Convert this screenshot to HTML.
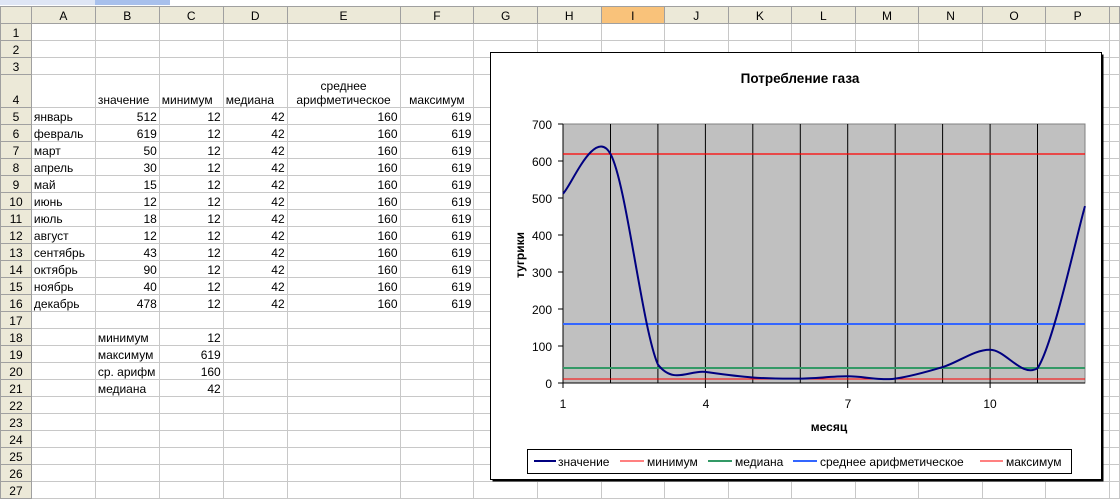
<!DOCTYPE html>
<html><head><meta charset="utf-8"><style>
body{margin:0;width:1120px;height:493px;overflow:hidden;background:#fff;font-family:"Liberation Sans",Arial,sans-serif;font-size:12px;position:relative}
table{border-collapse:collapse;table-layout:fixed;position:absolute;left:0;top:6px}
td{border:1px solid #c8c8c8;height:16px;padding:0 2px;white-space:nowrap;overflow:hidden;line-height:14px;vertical-align:bottom}
td.h{background:#ece9d8;border-color:#a0a0a0;text-align:center;color:#000}
td.r{text-align:right}
td.c{text-align:center}
tr.hd td{background:#ece9d8;border-color:#a0a0a0;text-align:center;height:16px}
td.sel{background:#f9c27a!important}
.top{position:absolute;left:0;top:0;width:170px;height:5px;background:#a8c0ec}
.top2{position:absolute;left:0;top:0;width:95px;height:5px;background:#dfe6f5}
</style></head><body>
<div class="top"></div><div class="top2"></div>
<table>
<colgroup><col style="width:31px"><col style="width:64px"><col style="width:64px"><col style="width:64px"><col style="width:64px"><col style="width:113px"><col style="width:74px"><col style="width:64px"><col style="width:64px"><col style="width:64px"><col style="width:64px"><col style="width:64px"><col style="width:64px"><col style="width:64px"><col style="width:64px"><col style="width:64px"><col style="width:64px"><col style="width:10px"></colgroup>
<tr class="hd"><td></td><td>A</td><td>B</td><td>C</td><td>D</td><td>E</td><td>F</td><td>G</td><td>H</td><td class="sel">I</td><td>J</td><td>K</td><td>L</td><td>M</td><td>N</td><td>O</td><td>P</td><td></td></tr>
<tr><td class="h">1</td><td></td><td></td><td></td><td></td><td></td><td></td><td></td><td></td><td></td><td></td><td></td><td></td><td></td><td></td><td></td><td></td><td></td></tr>
<tr><td class="h">2</td><td></td><td></td><td></td><td></td><td></td><td></td><td></td><td></td><td></td><td></td><td></td><td></td><td></td><td></td><td></td><td></td><td></td></tr>
<tr><td class="h">3</td><td></td><td></td><td></td><td></td><td></td><td></td><td></td><td></td><td></td><td></td><td></td><td></td><td></td><td></td><td></td><td></td><td></td></tr>
<tr><td class="h" style="height:32px;vertical-align:bottom">4</td><td></td><td>значение</td><td>минимум</td><td>медиана</td><td class="c">среднее<br>арифметическое</td><td class="c">максимум</td><td></td><td></td><td></td><td></td><td></td><td></td><td></td><td></td><td></td><td></td><td></td></tr>
<tr><td class="h">5</td><td>январь</td><td class="r">512</td><td class="r">12</td><td class="r">42</td><td class="r">160</td><td class="r">619</td><td></td><td></td><td></td><td></td><td></td><td></td><td></td><td></td><td></td><td></td><td></td></tr>
<tr><td class="h">6</td><td>февраль</td><td class="r">619</td><td class="r">12</td><td class="r">42</td><td class="r">160</td><td class="r">619</td><td></td><td></td><td></td><td></td><td></td><td></td><td></td><td></td><td></td><td></td><td></td></tr>
<tr><td class="h">7</td><td>март</td><td class="r">50</td><td class="r">12</td><td class="r">42</td><td class="r">160</td><td class="r">619</td><td></td><td></td><td></td><td></td><td></td><td></td><td></td><td></td><td></td><td></td><td></td></tr>
<tr><td class="h">8</td><td>апрель</td><td class="r">30</td><td class="r">12</td><td class="r">42</td><td class="r">160</td><td class="r">619</td><td></td><td></td><td></td><td></td><td></td><td></td><td></td><td></td><td></td><td></td><td></td></tr>
<tr><td class="h">9</td><td>май</td><td class="r">15</td><td class="r">12</td><td class="r">42</td><td class="r">160</td><td class="r">619</td><td></td><td></td><td></td><td></td><td></td><td></td><td></td><td></td><td></td><td></td><td></td></tr>
<tr><td class="h">10</td><td>июнь</td><td class="r">12</td><td class="r">12</td><td class="r">42</td><td class="r">160</td><td class="r">619</td><td></td><td></td><td></td><td></td><td></td><td></td><td></td><td></td><td></td><td></td><td></td></tr>
<tr><td class="h">11</td><td>июль</td><td class="r">18</td><td class="r">12</td><td class="r">42</td><td class="r">160</td><td class="r">619</td><td></td><td></td><td></td><td></td><td></td><td></td><td></td><td></td><td></td><td></td><td></td></tr>
<tr><td class="h">12</td><td>август</td><td class="r">12</td><td class="r">12</td><td class="r">42</td><td class="r">160</td><td class="r">619</td><td></td><td></td><td></td><td></td><td></td><td></td><td></td><td></td><td></td><td></td><td></td></tr>
<tr><td class="h">13</td><td>сентябрь</td><td class="r">43</td><td class="r">12</td><td class="r">42</td><td class="r">160</td><td class="r">619</td><td></td><td></td><td></td><td></td><td></td><td></td><td></td><td></td><td></td><td></td><td></td></tr>
<tr><td class="h">14</td><td>октябрь</td><td class="r">90</td><td class="r">12</td><td class="r">42</td><td class="r">160</td><td class="r">619</td><td></td><td></td><td></td><td></td><td></td><td></td><td></td><td></td><td></td><td></td><td></td></tr>
<tr><td class="h">15</td><td>ноябрь</td><td class="r">40</td><td class="r">12</td><td class="r">42</td><td class="r">160</td><td class="r">619</td><td></td><td></td><td></td><td></td><td></td><td></td><td></td><td></td><td></td><td></td><td></td></tr>
<tr><td class="h">16</td><td>декабрь</td><td class="r">478</td><td class="r">12</td><td class="r">42</td><td class="r">160</td><td class="r">619</td><td></td><td></td><td></td><td></td><td></td><td></td><td></td><td></td><td></td><td></td><td></td></tr>
<tr><td class="h">17</td><td></td><td></td><td></td><td></td><td></td><td></td><td></td><td></td><td></td><td></td><td></td><td></td><td></td><td></td><td></td><td></td><td></td></tr>
<tr><td class="h">18</td><td></td><td>минимум</td><td class="r">12</td><td></td><td></td><td></td><td></td><td></td><td></td><td></td><td></td><td></td><td></td><td></td><td></td><td></td><td></td></tr>
<tr><td class="h">19</td><td></td><td>максимум</td><td class="r">619</td><td></td><td></td><td></td><td></td><td></td><td></td><td></td><td></td><td></td><td></td><td></td><td></td><td></td><td></td></tr>
<tr><td class="h">20</td><td></td><td>ср. арифм</td><td class="r">160</td><td></td><td></td><td></td><td></td><td></td><td></td><td></td><td></td><td></td><td></td><td></td><td></td><td></td><td></td></tr>
<tr><td class="h">21</td><td></td><td>медиана</td><td class="r">42</td><td></td><td></td><td></td><td></td><td></td><td></td><td></td><td></td><td></td><td></td><td></td><td></td><td></td><td></td></tr>
<tr><td class="h">22</td><td></td><td></td><td></td><td></td><td></td><td></td><td></td><td></td><td></td><td></td><td></td><td></td><td></td><td></td><td></td><td></td><td></td></tr>
<tr><td class="h">23</td><td></td><td></td><td></td><td></td><td></td><td></td><td></td><td></td><td></td><td></td><td></td><td></td><td></td><td></td><td></td><td></td><td></td></tr>
<tr><td class="h">24</td><td></td><td></td><td></td><td></td><td></td><td></td><td></td><td></td><td></td><td></td><td></td><td></td><td></td><td></td><td></td><td></td><td></td></tr>
<tr><td class="h">25</td><td></td><td></td><td></td><td></td><td></td><td></td><td></td><td></td><td></td><td></td><td></td><td></td><td></td><td></td><td></td><td></td><td></td></tr>
<tr><td class="h">26</td><td></td><td></td><td></td><td></td><td></td><td></td><td></td><td></td><td></td><td></td><td></td><td></td><td></td><td></td><td></td><td></td><td></td></tr>
<tr><td class="h">27</td><td></td><td></td><td></td><td></td><td></td><td></td><td></td><td></td><td></td><td></td><td></td><td></td><td></td><td></td><td></td><td></td><td></td></tr>
</table>

<svg style="position:absolute;left:0;top:0" width="1120" height="493" font-family="Liberation Sans, Arial, sans-serif">
<rect x="492.5" y="54.5" width="611" height="427" fill="#000"/>
<rect x="490.5" y="52.5" width="611" height="427" fill="#fff" stroke="#000"/>
<text x="800" y="83" text-anchor="middle" font-size="13.5" font-weight="bold">Потребление газа</text>
<rect x="563" y="124" width="522" height="259" fill="#c0c0c0" stroke="#808080"/>
<g stroke="#000" stroke-width="1">
<line x1="610.5" y1="124" x2="610.5" y2="383"/><line x1="657.9" y1="124" x2="657.9" y2="383"/><line x1="705.4" y1="124" x2="705.4" y2="383"/><line x1="752.8" y1="124" x2="752.8" y2="383"/><line x1="800.3" y1="124" x2="800.3" y2="383"/><line x1="847.7" y1="124" x2="847.7" y2="383"/><line x1="895.2" y1="124" x2="895.2" y2="383"/><line x1="942.6" y1="124" x2="942.6" y2="383"/><line x1="990.1" y1="124" x2="990.1" y2="383"/><line x1="1037.5" y1="124" x2="1037.5" y2="383"/>
<line x1="563" y1="124" x2="563" y2="388"/><line x1="558" y1="124" x2="563" y2="124"/><line x1="558" y1="161" x2="563" y2="161"/><line x1="558" y1="198" x2="563" y2="198"/><line x1="558" y1="235" x2="563" y2="235"/><line x1="558" y1="272" x2="563" y2="272"/><line x1="558" y1="309" x2="563" y2="309"/><line x1="558" y1="346" x2="563" y2="346"/><line x1="558" y1="383" x2="1085" y2="383"/>
<line x1="705.4" y1="383" x2="705.4" y2="388"/><line x1="847.7" y1="383" x2="847.7" y2="388"/><line x1="990.1" y1="383" x2="990.1" y2="388"/>
</g>
<g font-size="12" text-anchor="end">
<text x="552" y="129">700</text><text x="552" y="166">600</text><text x="552" y="203">500</text><text x="552" y="240">400</text><text x="552" y="277">300</text><text x="552" y="314">200</text><text x="552" y="351">100</text><text x="552" y="388">0</text>
</g>
<g font-size="12" text-anchor="middle">
<text x="563" y="408">1</text><text x="706" y="408">4</text><text x="848" y="408">7</text><text x="990" y="408">10</text>
</g>
<text x="829" y="431" text-anchor="middle" font-size="12" font-weight="bold">месяц</text>
<text transform="translate(524,255) rotate(-90)" text-anchor="middle" font-size="12" font-weight="bold">тугрики</text>
<line x1="563" y1="154" x2="1085" y2="154" stroke="#ff0000" stroke-width="1.2"/>
<line x1="563" y1="379" x2="1085" y2="379" stroke="#ff0000" stroke-width="1"/>
<line x1="563" y1="368" x2="1085" y2="368" stroke="#339966" stroke-width="2"/>
<line x1="563" y1="324" x2="1085" y2="324" stroke="#3366ff" stroke-width="2"/>
<path fill="none" stroke="#000080" stroke-width="2" d="M563,193.6 C570.9,187 594.7,125.5 610.5,154 C626.3,182.5 642.1,328.2 657.9,364.5 C673.7,385 689.6,369.7 705.4,371.9 C721.2,374.1 737,376.4 752.8,377.5 C768.6,378.6 784.5,378.8 800.3,378.6 C816.1,378.4 831.9,376.3 847.7,376.3 C863.5,376.3 879.4,380.7 895.2,378.6 C911,376.4 926.8,371.9 942.6,367.1 C958.4,362.3 974.3,349.5 990.1,349.7 C1005.9,349.9 1021.7,378 1037.5,368.2 C1053.3,344.6 1077.1,233.1 1085,206.1"/>
<rect x="527.5" y="449.5" width="544" height="24" fill="#fff" stroke="#000"/>
<g font-size="12">
<line x1="534" y1="461" x2="556" y2="461" stroke="#000080" stroke-width="2"/><text x="558" y="466">значение</text>
<line x1="620" y1="461" x2="644" y2="461" stroke="#ff0000"/><text x="647" y="466">минимум</text>
<line x1="708" y1="461" x2="732" y2="461" stroke="#339966" stroke-width="2"/><text x="735" y="466">медиана</text>
<line x1="793" y1="461" x2="817" y2="461" stroke="#3366ff" stroke-width="2"/><text x="820" y="466">среднее арифметическое</text>
<line x1="980" y1="461" x2="1003" y2="461" stroke="#ff0000"/><text x="1006" y="466">максимум</text>
</g>
</svg>
</body></html>
